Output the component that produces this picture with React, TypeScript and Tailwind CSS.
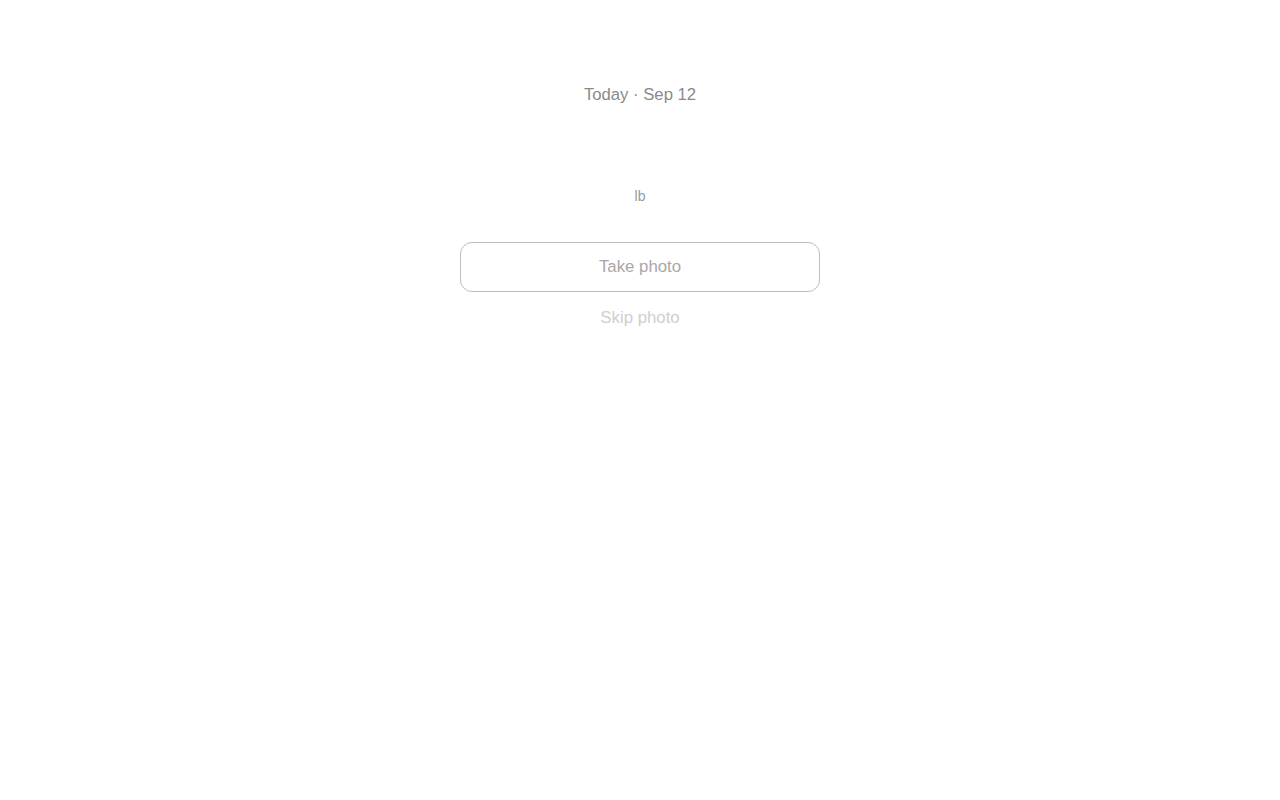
import { useState } from "react";

export default function App() {
  const [weight, setWeight] = useState("");

  return (
    <div className="min-h-screen bg-white font-['Liberation_Sans',Arial,sans-serif]">
      <div className="mx-auto flex w-[360px] flex-col items-center pt-[85px]">
        <p className="text-[16.7px] leading-5 text-[#8a8a8a]">Today · Sep 12</p>

        <input
          value={weight}
          onChange={(e) => setWeight(e.target.value)}
          inputMode="decimal"
          className="mt-[13px] h-[54px] w-full bg-transparent text-center text-5xl text-[#333] outline-none"
        />

        <p className="mt-[14px] text-sm leading-5 text-[#999]">lb</p>

        <button className="mt-9 h-[50px] w-full rounded-xl border border-[#bdbdbd] text-[16.8px] text-[#a8a8a8]">
          Take photo
        </button>

        <button className="mt-4 text-[16.8px] leading-5 text-[#cfcfcf]">Skip photo</button>
      </div>
    </div>
  );
}
